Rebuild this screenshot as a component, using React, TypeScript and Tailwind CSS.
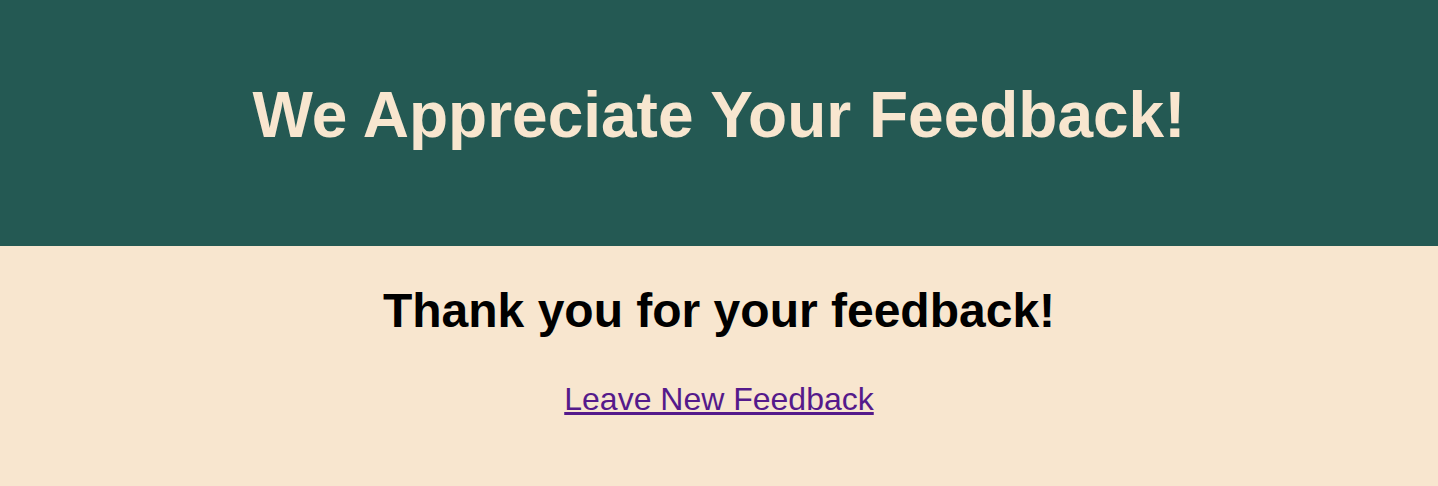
export default function App() {
  return (
    <div className="min-h-[486px] bg-[#f8e6cf] font-['Liberation_Sans',Arial,sans-serif]">
      <header className="h-[246px] bg-[#245953] flex items-center justify-center pb-[16px]">
        <h1 className="text-[64px] font-bold text-[#f8e6cf] leading-none">We Appreciate Your Feedback!</h1>
      </header>
      <main className="flex flex-col items-center">
        <h2 className="mt-[41px] text-[48px] font-bold text-black leading-none">Thank you for your feedback!</h2>
        <a href="#" className="mt-[48px] text-[32px] text-[#551a8b] underline leading-none">Leave New Feedback</a>
      </main>
    </div>
  );
}
